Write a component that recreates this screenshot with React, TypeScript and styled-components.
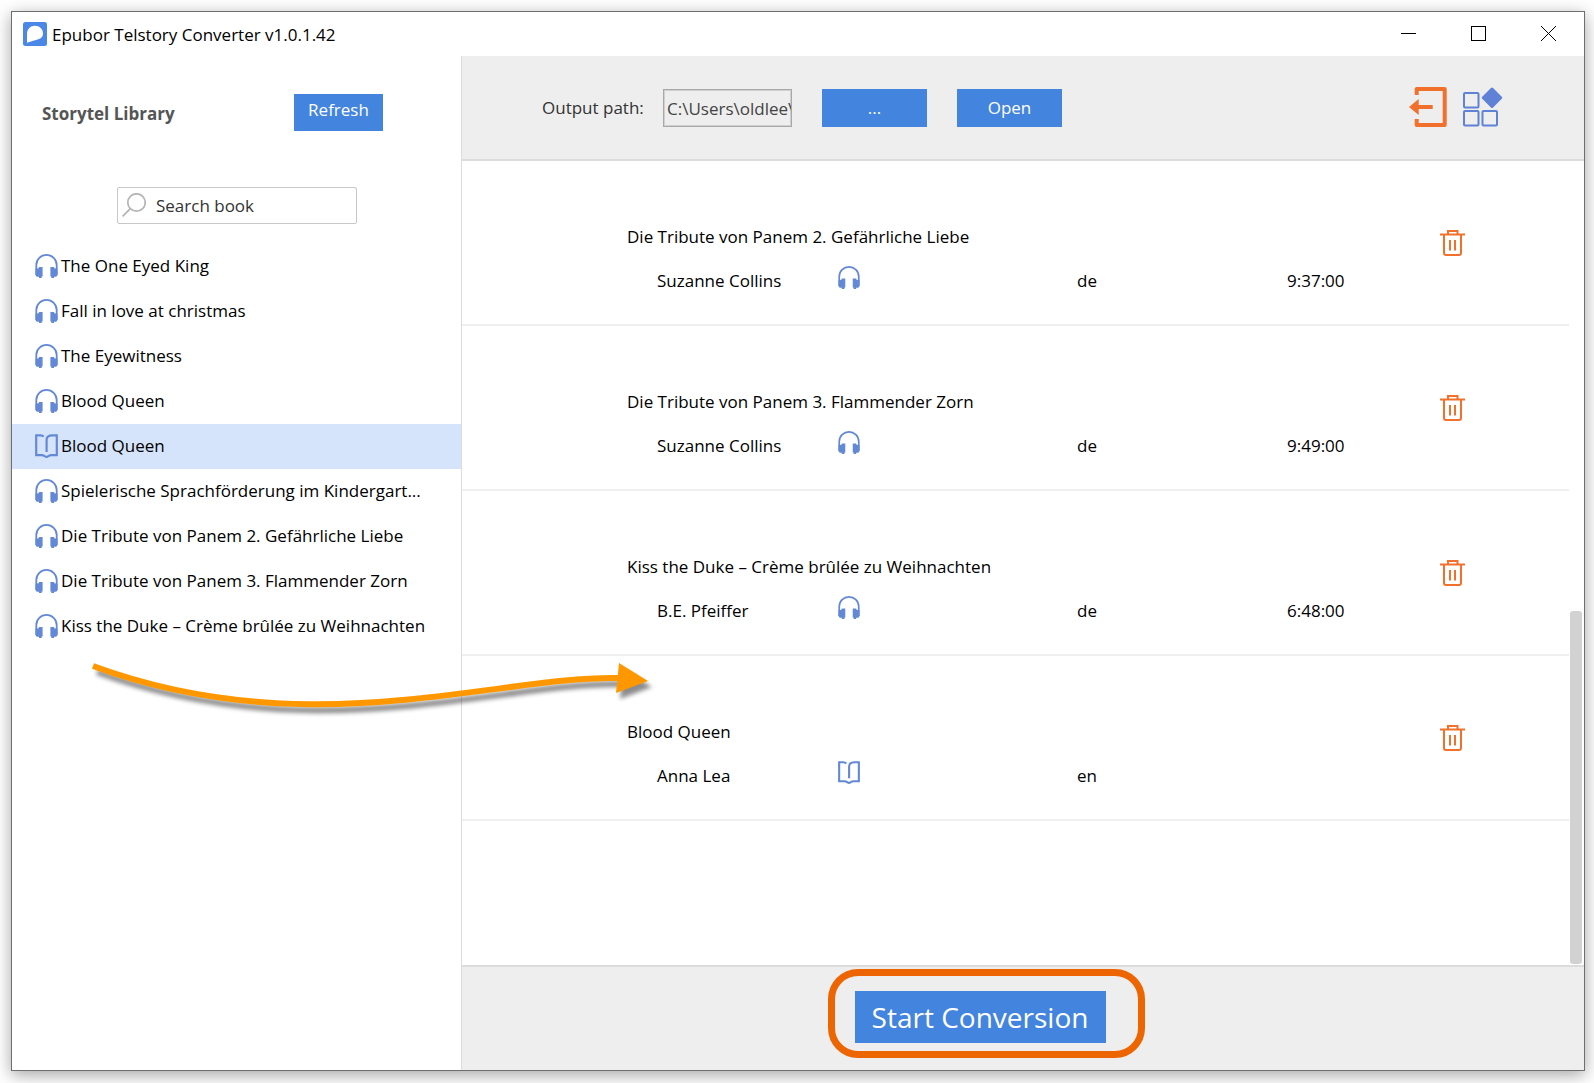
import React from "react";
import styled, { createGlobalStyle } from "styled-components";

const blue = "#4384de";
const iconBlue = "#6389d6";
const orange = "#f1702c";
const panel = "#eeeeee";
const rule = "#dcdcdc";

const GlobalStyle = createGlobalStyle`
  *, *::before, *::after { box-sizing: border-box; }
  html, body, #root { height: 100%; }
  body {
    margin: 0;
    background: #fff;
    color: #000;
    font-family: "Segoe UI", "Open Sans", "Noto Sans", sans-serif;
    font-size: 17px;
    line-height: 24px;
  }
  button, input { font: inherit; }
  svg { display: block; }
`;

const Desktop = styled.div`
  position: relative;
  height: 100%;
  padding: 11px 9px 12px 11px;
  overflow: hidden;
`;

const Window = styled.div`
  height: 100%;
  display: flex;
  flex-direction: column;
  border: 1px solid #6e6e6e;
  background: #fff;
  box-shadow: 0 4px 16px rgba(0, 0, 0, 0.36);
`;

const TitleBar = styled.header`
  flex: none;
  height: 44px;
  display: flex;
  align-items: center;
  padding: 0 1px 1px 11px;
`;

const AppTitle = styled.h1`
  flex: 1;
  margin: 0 0 0 5px;
  padding-top: 2px;
  font-size: 17px;
  font-weight: 400;
`;

const WindowButton = styled.button`
  width: 70px;
  height: 43px;
  display: grid;
  place-items: center;
  padding: 0;
  border: 0;
  background: transparent;
`;

const Body = styled.div`
  flex: 1;
  min-height: 0;
  display: flex;
`;

const Sidebar = styled.aside`
  flex: none;
  width: 450px;
  display: flex;
  flex-direction: column;
  border-right: 1px solid ${rule};
`;

const SidebarHeader = styled.div`
  display: flex;
  align-items: center;
  justify-content: space-between;
  padding: 38px 78px 0 30px;
`;

const LibraryTitle = styled.h2`
  margin: 0;
  padding-top: 2px;
  color: #555;
  font-size: 17px;
  font-weight: 700;
`;

const Button = styled.button<{ $width: number; $raised?: boolean }>`
  flex: none;
  width: ${(p) => p.$width}px;
  height: ${(p) => (p.$raised ? 37 : 38)}px;
  padding: ${(p) => (p.$raised ? "0 0 6px" : "0")};
  border: 0;
  background: ${blue};
  color: #fff;
`;

const SearchBox = styled.label`
  width: 240px;
  height: 37px;
  margin: 56px 0 20px 105px;
  display: flex;
  align-items: center;
  gap: 10px;
  padding: 0 4px 2px;
  border: 1px solid #c8c8c8;
  border-radius: 2px;
`;

const SearchInput = styled.input`
  flex: 1;
  min-width: 0;
  padding: 3px 0 0;
  border: 0;
  outline: 0;
  background: transparent;
  &::placeholder { color: #333; opacity: 1; }
`;

const Library = styled.ul`
  margin: 0;
  padding: 0;
  list-style: none;
`;

const LibraryItem = styled.li<{ $selected?: boolean }>`
  height: 45px;
  display: flex;
  align-items: center;
  gap: 3px;
  padding: 0 0 1px 23px;
  white-space: nowrap;
  background: ${(p) => (p.$selected ? "#d6e4fb" : "transparent")};
`;

const Main = styled.main`
  flex: 1;
  min-width: 0;
  display: flex;
  flex-direction: column;
`;

const Toolbar = styled.div`
  flex: none;
  height: 105px;
  display: flex;
  align-items: center;
  padding: 0 81px 0 80px;
  border-bottom: 2px solid ${rule};
  background: ${panel};
`;

const PathLabel = styled.label`
  flex: none;
  width: 121px;
  color: #333;
`;

const PathInput = styled.input`
  width: 129px;
  height: 38px;
  padding: 2px 0 0 3px;
  border: 1px solid #a8a8a8;
  outline: 0;
  box-shadow: inset 0 0 0 1px #d0d0d0;
  background: ${panel};
  color: #444;
`;

const ToolbarButtons = styled.div`
  flex: 1;
  display: flex;
  gap: 30px;
  margin-left: 30px;
`;

const ToolbarIcons = styled.div`
  display: flex;
  gap: 16px;
  padding-bottom: 2px;
`;

const IconButton = styled.button`
  padding: 0;
  border: 0;
  background: transparent;
`;

const QueueArea = styled.div`
  flex: 1;
  min-height: 0;
  display: flex;
  overflow: hidden;
`;

const Queue = styled.ul`
  flex: 1;
  margin: 0;
  padding: 0;
  list-style: none;
`;

const QueueRow = styled.li`
  height: 165px;
  display: grid;
  grid-template-columns: 211fr 239fr 210fr 153fr 129fr;
  grid-template-rows: 24px 24px;
  row-gap: 20px;
  padding: 64px 0 0 165px;
  border-bottom: 2px solid #efefef;
`;

const BookTitle = styled.div`
  grid-column: 1 / 5;
`;

const Author = styled.div`
  padding-left: 30px;
`;

const FormatCell = styled.div`
  margin-top: -3px;
`;

const DeleteCell = styled.div`
  grid-column: 5;
  grid-row: 1;
  padding-top: 5px;
`;

const ScrollTrack = styled.div`
  flex: none;
  width: 15px;
  display: flex;
  flex-direction: column;
  justify-content: flex-end;
  padding: 1px 2px 1px 1px;
`;

const ScrollThumb = styled.div`
  height: 44%;
  border-radius: 3px;
  background: #d2d2d2;
`;

const Footer = styled.footer`
  flex: none;
  height: 105px;
  display: flex;
  justify-content: center;
  align-items: center;
  padding: 0 86px 4px 0;
  border-top: 2px solid ${rule};
  background: ${panel};
`;

const StartWrap = styled.div`
  position: relative;
`;

const StartButton = styled.button`
  display: block;
  width: 251px;
  height: 52px;
  padding: 0;
  border: 0;
  background: ${blue};
  color: #fff;
  font-size: 28px;
`;

const Highlight = styled.div`
  position: absolute;
  inset: -22px -39px -15px -27px;
  border: 7px solid #ec6500;
  border-radius: 30px;
  pointer-events: none;
`;

const DragArrow = styled.svg`
  position: absolute;
  left: 80px;
  top: 650px;
  pointer-events: none;
  filter: drop-shadow(4px 6px 2px rgba(0, 0, 0, 0.45));
`;

type Format = "audio" | "ebook";

const HeadphonesIcon = ({ size = 24 }: { size?: number }) => (
  <svg width={size - 1} height={size} viewBox="0 0 23 24" fill="none" aria-hidden="true">
    <path d="M1.300 21V11C1.300 5.200 6 .9 11.500 .9S21.700 5.200 21.700 11v10" stroke={iconBlue} strokeWidth="1.800" />
    <path
      d="M.5 14.500h2.700l1-1.500h3.400v9.500H6.700V24H4v-1.200H1.700L.5 21zM22.500 14.500h-2.700l-1-1.500h-3.400v9.500h.9V24H19v-1.200h2.300L22.500 21z"
      fill={iconBlue}
    />
  </svg>
);

const BookIcon = ({ size = 24 }: { size?: number }) => (
  <svg width={size - 1} height={size} viewBox="0 0 23 24" fill="none" stroke={iconBlue} strokeWidth="2.200" aria-hidden="true">
    <path d="M8.700 2.600C8 1.700 7 1.300 5.500 1.300H1.200V21.200H7C9 21.200 10 22.900 11.500 22.900S14 21.200 16 21.200H21.800V1.300H17.500C13.500 1.300 11.600 2.700 11.600 5.700V18" />
  </svg>
);

const FormatIcon = ({ format, size }: { format: Format; size?: number }) =>
  format === "audio" ? <HeadphonesIcon size={size} /> : <BookIcon size={size} />;

const LogoIcon = () => (
  <svg width="24" height="24" viewBox="0 0 24 24" aria-hidden="true">
    <rect width="24" height="24" rx="2.500" fill="#4b87e6" />
    <path d="M4 20.800V12C4 7 7.500 3.800 12 3.800S20 7 20 11.500C20 18 13 17.500 4 20.800z" fill="#fff" />
  </svg>
);

const SearchIcon = () => (
  <svg width="24" height="24" viewBox="0 0 24 24" fill="none" stroke="#b4b4b4" strokeWidth="1.700" aria-hidden="true">
    <circle cx="14.500" cy="9.500" r="8.700" />
    <path d="M8.300 15.700L.6 23.400" />
  </svg>
);

const ExitIcon = () => (
  <svg width="38" height="40" viewBox="0 0 38 40" aria-hidden="true">
    <path d="M7.700 8V2H35.700V38H7.700V32" fill="none" stroke={orange} strokeWidth="4" strokeLinejoin="round" />
    <path d="M0 20L9.700 12v6H23.700v4H9.700v6z" fill={orange} />
  </svg>
);

const AppsIcon = () => (
  <svg width="40" height="40" viewBox="0 0 40 40" fill="none" stroke="#5f82d6" strokeWidth="2" aria-hidden="true">
    <rect x="1" y="6" width="14.500" height="14.500" rx="1" />
    <rect x="1" y="24" width="14.500" height="14.500" rx="1" />
    <rect x="19.500" y="24" width="14.500" height="14.500" rx="1" />
    <path d="M29 2L37.700 10.700L29 19.400L20.300 10.700z" fill="#5f82d6" strokeWidth="3" strokeLinejoin="round" />
  </svg>
);

const TrashIcon = () => (
  <svg width="25" height="26" viewBox="0 0 25 26" fill="none" stroke={orange} strokeWidth="2" aria-hidden="true">
    <path d="M0 4.500H25M8 4V1H17.500V4M4 5V23C4 24.300 4.700 25 6 25H19C20.300 25 21 24.300 21 23V5" />
    <path d="M10 10V20.500M15 10V20.500" />
  </svg>
);

const library: { title: string; format: Format; selected?: boolean }[] = [
  { title: "The One Eyed King", format: "audio" },
  { title: "Fall in love at christmas", format: "audio" },
  { title: "The Eyewitness", format: "audio" },
  { title: "Blood Queen", format: "audio" },
  { title: "Blood Queen", format: "ebook", selected: true },
  { title: "Spielerische Sprachförderung im Kindergart...", format: "audio" },
  { title: "Die Tribute von Panem 2. Gefährliche Liebe", format: "audio" },
  { title: "Die Tribute von Panem 3. Flammender Zorn", format: "audio" },
  { title: "Kiss the Duke – Crème brûlée zu Weihnachten", format: "audio" },
];

const queue: { title: string; author: string; format: Format; language: string; duration: string }[] = [
  { title: "Die Tribute von Panem 2. Gefährliche Liebe", author: "Suzanne Collins", format: "audio", language: "de", duration: "9:37:00" },
  { title: "Die Tribute von Panem 3. Flammender Zorn", author: "Suzanne Collins", format: "audio", language: "de", duration: "9:49:00" },
  { title: "Kiss the Duke – Crème brûlée zu Weihnachten", author: "B.E. Pfeiffer", format: "audio", language: "de", duration: "6:48:00" },
  { title: "Blood Queen", author: "Anna Lea", format: "ebook", language: "en", duration: "" },
];

export default function App() {
  return (
    <>
      <GlobalStyle />
      <Desktop>
        <Window>
          <TitleBar>
            <LogoIcon />
            <AppTitle>Epubor Telstory Converter v1.0.1.42</AppTitle>
            <WindowButton aria-label="Minimize">
              <svg width="15" height="15" stroke="#000"><path d="M0 7.500H15" /></svg>
            </WindowButton>
            <WindowButton aria-label="Maximize">
              <svg width="15" height="15" stroke="#000" fill="none"><rect x=".5" y=".5" width="14" height="14" /></svg>
            </WindowButton>
            <WindowButton aria-label="Close">
              <svg width="15" height="15" stroke="#000"><path d="M0 0L15 15M15 0L0 15" /></svg>
            </WindowButton>
          </TitleBar>
          <Body>
            <Sidebar>
              <SidebarHeader>
                <LibraryTitle>Storytel Library</LibraryTitle>
                <Button $width={89} $raised>Refresh</Button>
              </SidebarHeader>
              <SearchBox>
                <SearchIcon />
                <SearchInput type="text" placeholder="Search book" aria-label="Search book" />
              </SearchBox>
              <Library>
                {library.map((book, i) => (
                  <LibraryItem key={i} $selected={book.selected}>
                    <FormatIcon format={book.format} />
                    <span>{book.title}</span>
                  </LibraryItem>
                ))}
              </Library>
            </Sidebar>
            <Main>
              <Toolbar>
                <PathLabel htmlFor="output-path">Output path:</PathLabel>
                <PathInput id="output-path" type="text" readOnly value={"C:\\Users\\oldlee\\"} />
                <ToolbarButtons>
                  <Button $width={105}>...</Button>
                  <Button $width={105}>Open</Button>
                </ToolbarButtons>
                <ToolbarIcons>
                  <IconButton aria-label="Log out"><ExitIcon /></IconButton>
                  <IconButton aria-label="More apps"><AppsIcon /></IconButton>
                </ToolbarIcons>
              </Toolbar>
              <QueueArea>
                <Queue>
                  {queue.map((item) => (
                    <QueueRow key={item.title}>
                      <BookTitle>{item.title}</BookTitle>
                      <DeleteCell>
                        <IconButton aria-label={`Remove ${item.title}`}><TrashIcon /></IconButton>
                      </DeleteCell>
                      <Author>{item.author}</Author>
                      <FormatCell><FormatIcon format={item.format} size={23} /></FormatCell>
                      <div>{item.language}</div>
                      <div>{item.duration}</div>
                    </QueueRow>
                  ))}
                </Queue>
                <ScrollTrack><ScrollThumb /></ScrollTrack>
              </QueueArea>
              <Footer>
                <StartWrap>
                  <StartButton>Start Conversion</StartButton>
                  <Highlight />
                </StartWrap>
              </Footer>
            </Main>
          </Body>
        </Window>
        <DragArrow width="590" height="70" viewBox="80 650 590 70" aria-hidden="true">
          <path d="M93 666C310 746 500 675 620 678" fill="none" stroke="#ff9800" strokeWidth="6" />
          <path d="M619 663L648 681L616 693z" fill="#ff9800" />
        </DragArrow>
      </Desktop>
    </>
  );
}
